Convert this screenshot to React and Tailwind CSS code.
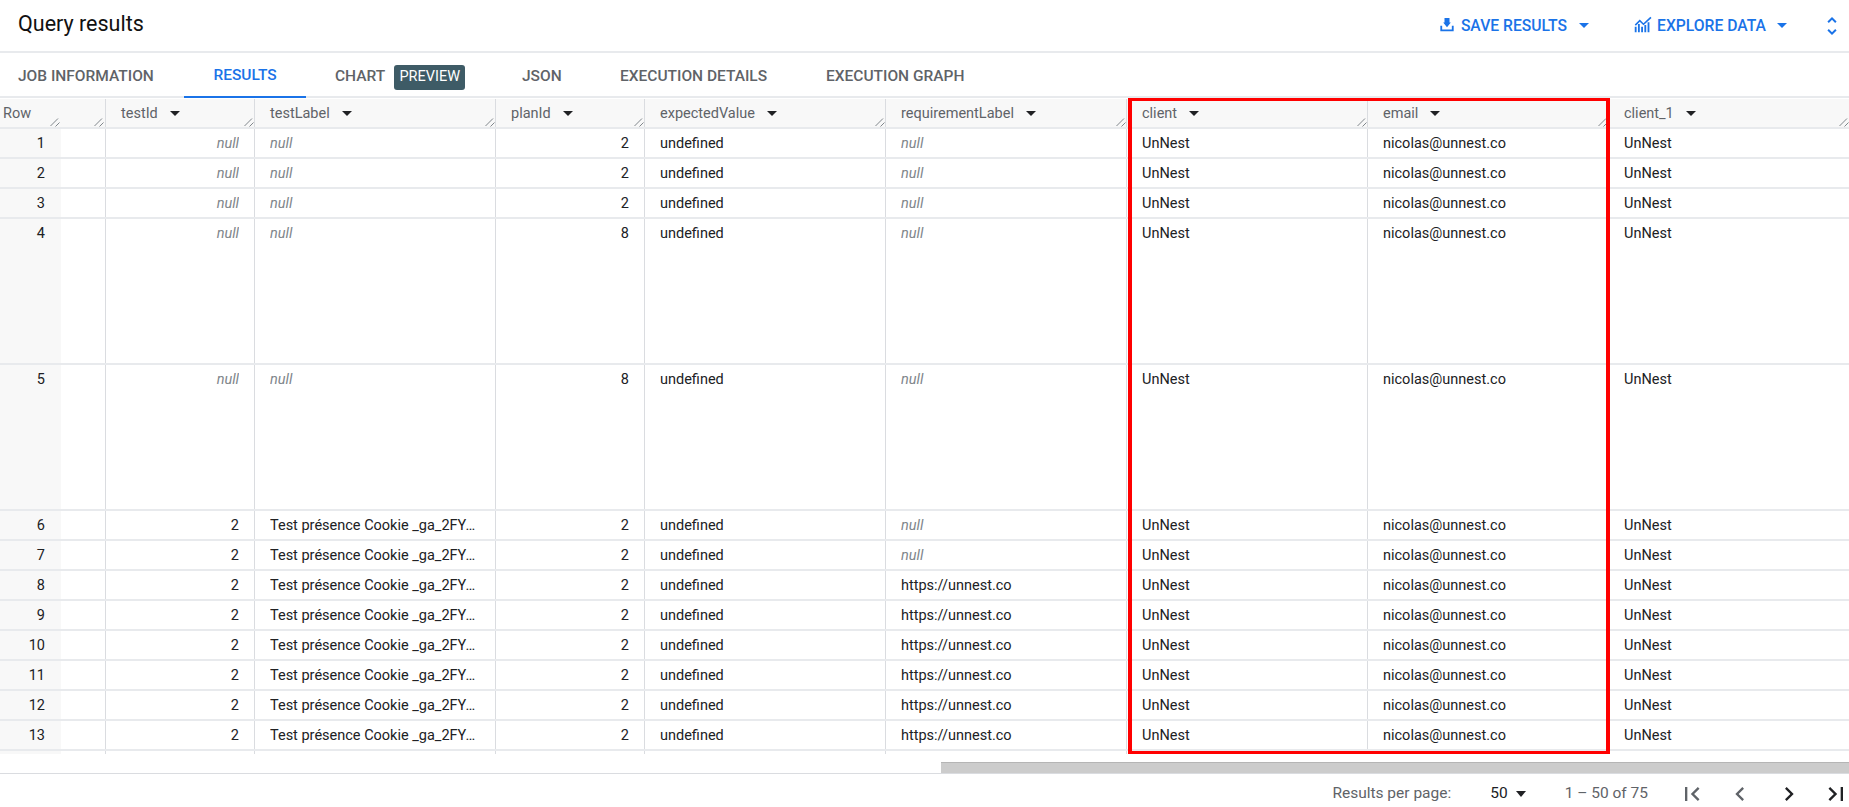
const columns = [
  { key: 'testId', width: 'w-[149px]', right: true },
  { key: 'testLabel', width: 'w-[241px]' },
  { key: 'planId', width: 'w-[149px]', right: true },
  { key: 'expectedValue', width: 'w-[241px]' },
  { key: 'requirementLabel', width: 'w-[241px]' },
  { key: 'client', width: 'w-[241px]' },
  { key: 'email', width: 'w-[241px]' },
  { key: 'client_1', width: 'w-[241px]' },
];

const tabs = [
  { label: 'JOB INFORMATION', width: 'w-[184px]' },
  { label: 'RESULTS', width: 'w-[122px]', active: true },
  { label: 'CHART', width: 'w-[198px]', badge: 'PREVIEW' },
  { label: 'JSON', width: 'w-[98px]' },
  { label: 'EXECUTION DETAILS', width: 'w-[206px]' },
  { label: 'EXECUTION GRAPH', width: 'w-[180px]' },
];

const cookie = 'Test présence Cookie _ga_2FYJK8L3MN';

function makeRow(row, testId, testLabel, planId, requirementLabel, tall) {
  return {
    row, tall, testId, testLabel, planId, requirementLabel,
    expectedValue: 'undefined', client: 'UnNest', email: 'nicolas@unnest.co', client_1: 'UnNest',
  };
}

const rows = [
  makeRow(1, null, null, 2, null),
  makeRow(2, null, null, 2, null),
  makeRow(3, null, null, 2, null),
  makeRow(4, null, null, 8, null, true),
  makeRow(5, null, null, 8, null, true),
  makeRow(6, 2, cookie, 2, null),
  makeRow(7, 2, cookie, 2, null),
  makeRow(8, 2, cookie, 2, 'https://unnest.co'),
  makeRow(9, 2, cookie, 2, 'https://unnest.co'),
  makeRow(10, 2, cookie, 2, 'https://unnest.co'),
  makeRow(11, 2, cookie, 2, 'https://unnest.co'),
  makeRow(12, 2, cookie, 2, 'https://unnest.co'),
  makeRow(13, 2, cookie, 2, 'https://unnest.co'),
  makeRow(14, 2, cookie, 2, 'https://unnest.co'),
];

function Mi({ d, className }) {
  return (
    <svg className={className} viewBox="0 0 24 24" fill="currentColor">
      <path d={d} />
    </svg>
  );
}

function Caret({ className }) {
  return <span className={`inline-block h-0 w-0 border-x-[5px] border-t-[5px] border-x-transparent ${className}`} />;
}

function Resize({ className }) {
  return (
    <svg className={`absolute bottom-0 h-[10px] w-[10px] text-[#80868b] ${className}`} viewBox="0 0 10 10" fill="none" stroke="currentColor" strokeWidth="1">
      <path d="M0.5 9L8 1.5M5.5 9.5L9.5 5.5" />
    </svg>
  );
}

function Cell({ col, value }) {
  const isNull = value === null;
  return (
    <div className={`${col.width} shrink-0 border-l border-[#dadce0] px-[15px] pt-[6px] ${col.right ? 'text-right' : ''}`}>
      <div className={`truncate ${isNull ? 'text-[#80868b] italic' : ''}`}>{isNull ? 'null' : value}</div>
    </div>
  );
}

export default function App() {
  return (
    <div className="flex h-screen w-full flex-col overflow-hidden bg-white font-['Roboto',sans-serif] text-[#202124]">
      <header className="flex h-[53px] shrink-0 items-center border-b-2 border-[#e8eaed] pl-[18px] pr-[5px]">
        <h1 className="-mt-[4px] flex-1 text-[21.5px] leading-none text-[#111]">Query results</h1>
        <div className="flex items-center text-[15.7px] font-medium text-[#1a73e8]">
          <Mi className="-mt-[2px] mr-[4px] h-[20px] w-[20px]" d="M16.59 9H15V3.5H9V9H7.41L12 14.6zM4 13h2.2v4.3h11.6V13H20v6.5H4z" />
          <span>SAVE RESULTS</span>
          <Caret className="ml-[12px] border-t-[#1a73e8]" />
          <Mi className="-mt-[2px] ml-[43px] mr-[3px] h-[22px] w-[22px]" d="M3 20v-6h2v6zm3.5 0v-9h2v9zm3.5 0v-6h2v6zm3.5 0v-8h2v8zm3.5 0V9h2v11zM3 11.5l5.5-5.5 4 4L20 3l1.3 1.4-8.8 8-4-4-4.3 4.3z" />
          <span>EXPLORE DATA</span>
          <Caret className="ml-[11px] border-t-[#1a73e8]" />
          <Mi className="ml-[33px] h-[24px] w-[24px]" d="M12 5.83L15.17 9l1.41-1.41L12 3 7.41 7.59 8.83 9 12 5.83zm0 12.34L8.83 15l-1.41 1.41L12 21l4.59-4.59L15.17 15 12 18.17z" />
        </div>
      </header>

      <nav className="flex h-[45px] shrink-0 border-b-2 border-[#e8eaed] text-[15.5px] font-medium text-[#5f6368]">
        {tabs.map((tab) => (
          <div
            key={tab.label}
            className={`${tab.width} -mb-[2px] flex items-center gap-[9px] pt-[3px] ${tab.active ? 'justify-center border-b-2 border-[#1a73e8] text-[#1a73e8]' : 'pl-[18px]'} ${tab.badge ? 'pl-[29px]' : ''}`}
          >
            {tab.label}
            {tab.badge && (
              <span className="flex h-[25px] w-[71px] items-center justify-center rounded-[3px] bg-[#3e5b66] text-[14.5px] font-normal text-white">
                {tab.badge}
              </span>
            )}
          </div>
        ))}
      </nav>

      <section className="relative min-h-0 flex-1 overflow-hidden pt-[1px] text-[14.5px] leading-[18px]">
        <div className="flex h-[30px] border-b-2 border-[#e8eaed] bg-[#f8f8f8] text-[#5f6368]">
          <div className="relative w-[105px] shrink-0 pl-[3px] pt-[6px]">
            Row
            <Resize className="left-[50px]" />
            <Resize className="left-[94px]" />
          </div>
          {columns.map((col) => (
            <div key={col.key} className={`${col.width} relative flex shrink-0 items-start border-l border-[#dadce0] pl-[15px] pt-[6px]`}>
              {col.key}
              <Caret className="ml-[12px] mt-[6px] border-t-[#202124]" />
              <Resize className="right-0" />
            </div>
          ))}
        </div>

        {rows.map((item) => (
          <div key={item.row} className={`flex border-b-2 border-[#e8eaed] ${item.tall ? 'h-[146px]' : 'h-[30px]'}`}>
            <div className="w-[105px] shrink-0">
              <div className="h-full w-[61px] bg-[#f8f8f8] pr-[16px] pt-[6px] text-right">{item.row}</div>
            </div>
            {columns.map((col) => (
              <Cell key={col.key} col={col} value={item[col.key]} />
            ))}
          </div>
        ))}

        <div className="pointer-events-none absolute left-[1128px] top-0 h-[656px] w-[482px] border-x-4 border-b-[3px] border-t-[3px] border-[#ff0000]" />
      </section>

      <div className="h-[19px] shrink-0 pl-[941px] pt-[8px]">
        <div className="h-[11px] border-t border-[#b5b5b5] bg-[#cccccc]" />
      </div>

      <footer className="flex h-[34px] shrink-0 items-center justify-end border-t border-[#dadce0] pt-[7px] text-[15.5px]">
        <span className="text-[#5f6368]">Results per page:</span>
        <span className="ml-[39px]">50</span>
        <span className="ml-[8px] inline-block h-0 w-0 border-x-[5px] border-t-[6px] border-x-transparent border-t-[#202124]" />
        <span className="ml-[39px] text-[#5f6368]">1 – 50 of 75</span>
        <Mi className="ml-[30px] h-[28px] w-[28px] text-[#5f6368]" d="M18.41 16.59L13.82 12l4.59-4.59L17 6l-6 6 6 6zM6 6h2v12H6z" />
        <Mi className="ml-[20px] h-[28px] w-[28px] text-[#5f6368]" d="M15.41 7.41L14 6l-6 6 6 6 1.41-1.41L10.83 12z" />
        <Mi className="ml-[21px] h-[28px] w-[28px] text-[#202124]" d="M10 6L8.59 7.41 13.17 12l-4.58 4.59L10 18l6-6z" />
        <Mi className="-mr-[1px] ml-[19px] h-[28px] w-[28px] text-[#202124]" d="M5.59 7.41L10.18 12l-4.59 4.59L7 18l6-6-6-6zM16 6h2v12h-2z" />
      </footer>
    </div>
  );
}
